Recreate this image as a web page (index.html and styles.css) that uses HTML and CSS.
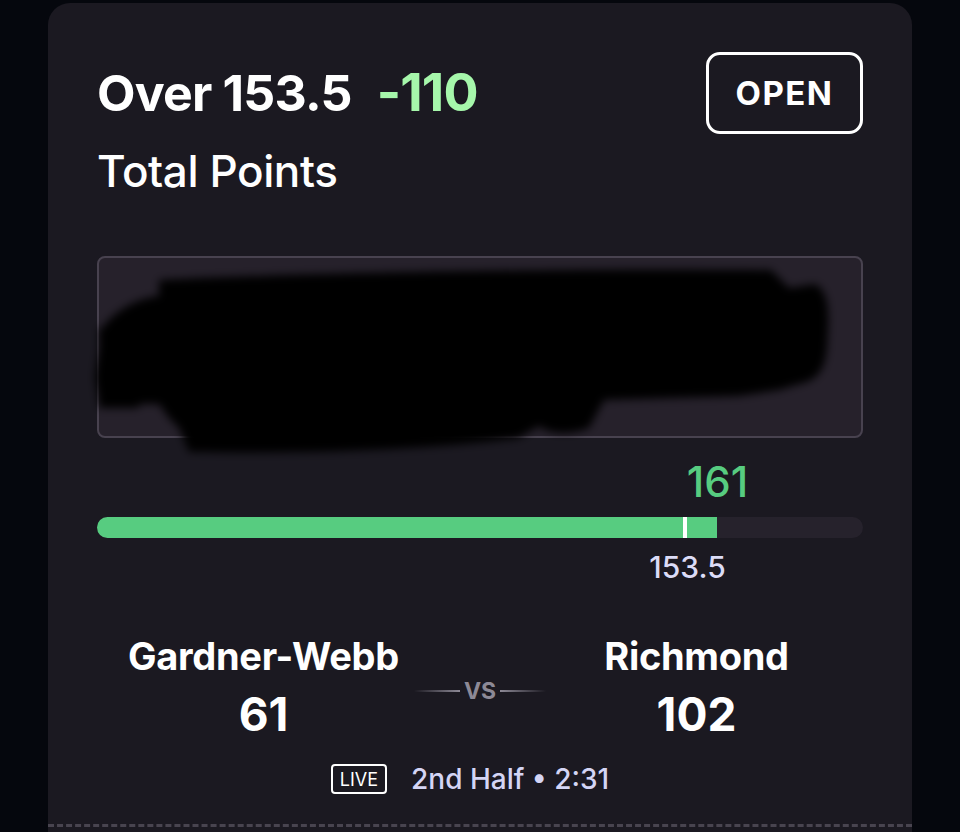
FILE: index.html
```html
<!DOCTYPE html>
<html lang="en">
<head>
<meta charset="UTF-8" />
<meta name="viewport" content="width=device-width, initial-scale=1.0">
<title>Bet Slip</title>
<link rel="stylesheet" href="styles.css">
</head>
<body>
<div class="card">
<div class="header">
<div class="titles">
<h1 class="pick">Over 153.5 <span class="odds">-110</span></h1>
<div class="market">Total Points</div>
</div>
<div class="status">OPEN</div>
</div>

<div class="wager">
<svg class="scribble" viewBox="0 0 768 182" preserveAspectRatio="none">
<defs>
<filter id="blur" x="-10%" y="-10%" width="120%" height="120%">
<feGaussianBlur stdDeviation="4" />
</filter>
</defs>
<g filter="url(#blur)" fill="#000">
<path d="M60 22 C 220 14, 480 10, 672 12 L 690 30 L 716 26 C 732 34, 730 60, 728 90 C 726 110, 720 122, 700 126 L 680 132 L 640 138 L 505 142 L 490 170 C 470 178, 450 176, 440 168 L 420 180 C 330 192, 200 196, 90 194 L 80 170 L 70 160 L 60 146 L 0 146 L -4 120 C -2 100, 2 80, 6 66 C 20 50, 40 40, 60 38 Z" />
<path d="M0 70 L 40 60 L 40 150 L 0 150 Z" />
</g>
</svg>
</div>

<div class="progress">
<div class="current" style="left: 81%">161</div>
<div class="track">
<div class="fill" style="width: 81%"></div>
<div class="line" style="left: 76.7%"></div>
</div>
<div class="target" style="left: 77.1%">153.5</div>
</div>

<div class="matchup">
<div class="team">
<div class="team-name">Gardner-Webb</div>
<div class="score">61</div>
</div>
<div class="vs"><span class="rule left"></span>VS<span class="rule right"></span></div>
<div class="team">
<div class="team-name">Richmond</div>
<div class="score">102</div>
</div>
</div>

<div class="game-status">
<span class="live">LIVE</span>
<span class="clock">2nd Half • 2:31</span>
</div>

<div class="divider"></div>
</div>
</body>
</html>
```

FILE: styles.css
```css
body {
margin: 0;
background: #05070d;
font-family: Inter, "Noto Sans", sans-serif;
color: #fff;
overflow: hidden;
}

.card {
margin: 3px 0 0 48px;
width: 864px;
height: 900px;
box-sizing: border-box;
padding: 49px 49px 0 49px;
background: #1b1921;
border-radius: 22px;
}

.header {
display: flex;
justify-content: space-between;
align-items: flex-start;
}

.pick {
margin: 11px 0 0 0;
font-size: 50px;
font-weight: 700;
letter-spacing: -0.8px;
line-height: 60px;
}

.odds {
color: #a6f7ab;
margin-left: 14px;
font-size: 52px;
}

.market {
margin-top: 22px;
font-size: 44px;
font-weight: 500;
line-height: 52px;
letter-spacing: -0.4px;
}

.status {
width: 157px;
height: 82px;
box-sizing: border-box;
border: 3px solid #fff;
border-radius: 14px;
display: flex;
align-items: center;
justify-content: center;
font-size: 33px;
font-weight: 700;
letter-spacing: 1.5px;
}

.wager {
margin-top: 59px;
height: 182px;
box-sizing: border-box;
border: 2px solid #48424f;
border-radius: 8px;
background: #26212b;
position: relative;
}

.scribble {
position: absolute;
left: 0;
top: 0;
width: 768px;
height: 182px;
overflow: visible;
}

.progress {
position: relative;
margin-top: 79px;
}

.track {
position: relative;
height: 21px;
border-radius: 11px;
background: #26222c;
overflow: hidden;
}

.fill {
height: 100%;
background: #57cc80;
}

.line {
position: absolute;
top: 0;
width: 4px;
height: 100%;
margin-left: -2px;
background: #fff;
}

.current {
position: absolute;
top: -55px;
transform: translateX(-50%);
color: #57cc80;
font-size: 42px;
line-height: 40px;
font-weight: 500;
}

.target {
position: absolute;
top: 35px;
transform: translateX(-50%);
color: #dcdcf7;
font-size: 30px;
line-height: 30px;
font-weight: 500;
}

.matchup {
margin-top: 96px;
display: grid;
grid-template-columns: 1fr 100px 1fr;
align-items: center;
}

.team {
text-align: center;
}

.team-name {
font-size: 38px;
font-weight: 700;
line-height: 44px;
letter-spacing: -0.3px;
}

.score {
margin-top: 11px;
font-size: 46px;
font-weight: 700;
line-height: 50px;
}

.vs {
display: flex;
align-items: center;
justify-content: center;
gap: 4px;
color: #8d8996;
font-size: 23px;
font-weight: 700;
margin-top: 8px;
}

.rule {
flex: none;
width: 46px;
height: 2px;
}

.rule.left {
background: linear-gradient(to right, rgba(141,137,150,0), #8d8996);
}

.rule.right {
background: linear-gradient(to left, rgba(141,137,150,0), #8d8996);
}

.game-status {
margin-top: 25px;
padding-right: 20px;
display: flex;
justify-content: center;
align-items: center;
gap: 24px;
}

.live {
box-sizing: border-box;
height: 30px;
display: flex;
align-items: center;
border: 2px solid #fff;
border-radius: 4px;
padding: 0 7px;
font-size: 18px;
font-weight: 400;
color: #fff;
}

.clock {
font-size: 28px;
line-height: 30px;
font-weight: 500;
color: #d4d5f5;
}

.divider {
margin: 30px -49px 0;
border-top: 3px dashed #48444f;
}
```
